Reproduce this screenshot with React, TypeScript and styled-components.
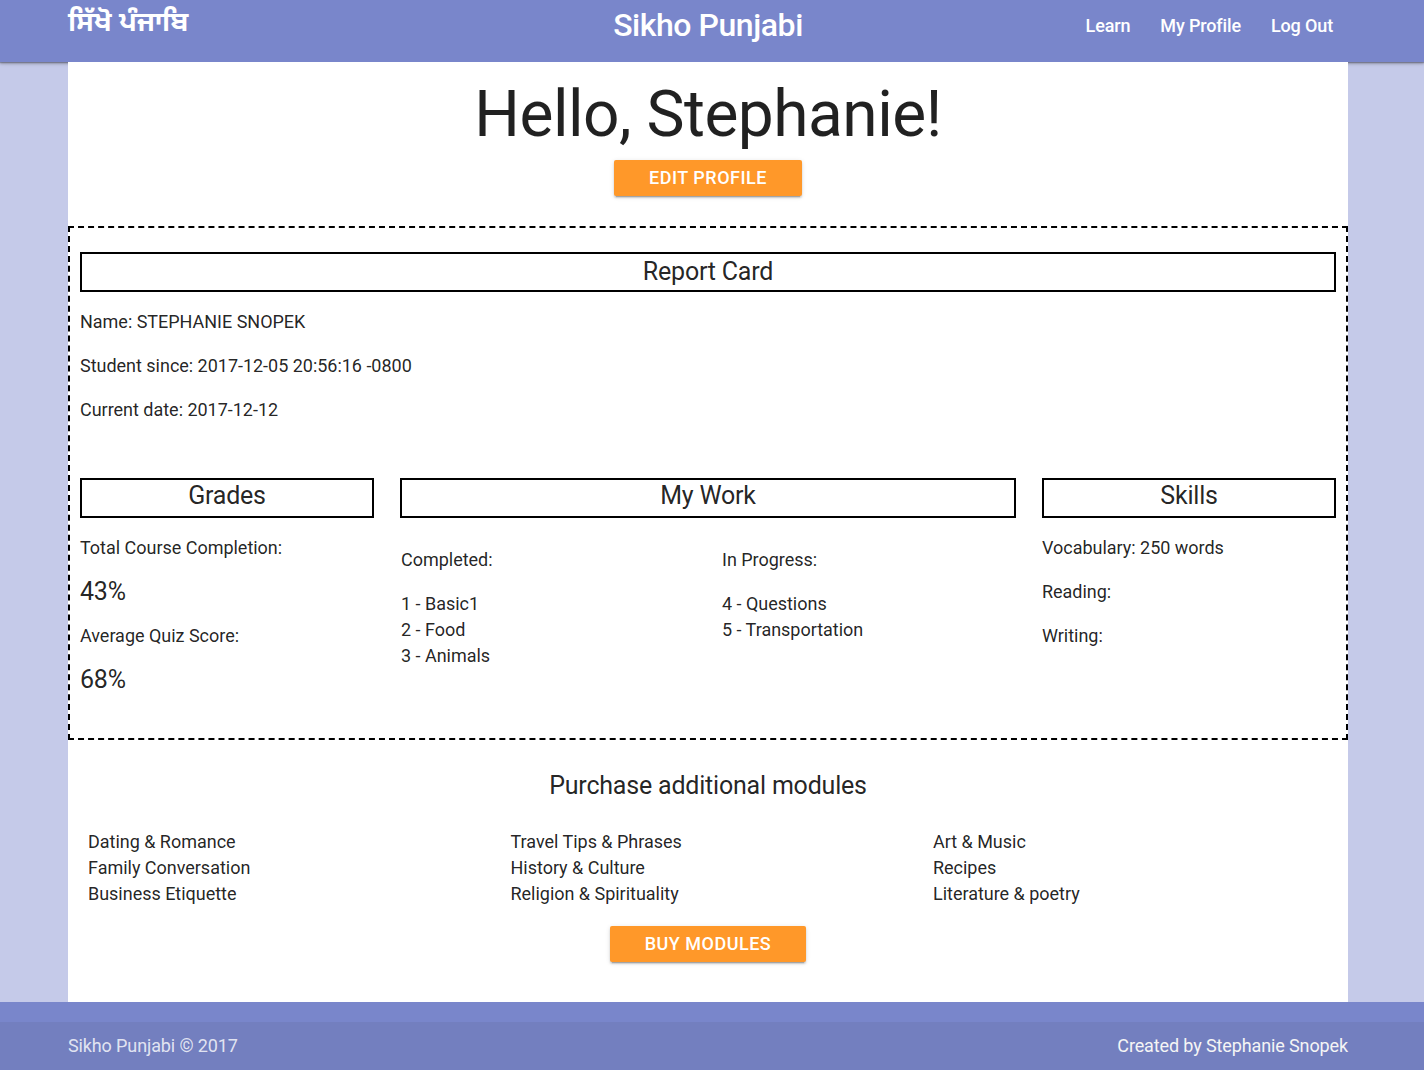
import React from "react";
import styled, { createGlobalStyle } from "styled-components";

const Global = createGlobalStyle`
  * { box-sizing: border-box; }
  body { margin: 0; background: #c5cae9; color: rgba(0,0,0,0.87); font: 18px/26px Roboto, sans-serif; letter-spacing: -.02px; }
  p, h1, h2, h3 { margin: 0; font-weight: 400; }
`;
const Nav = styled.nav`
  height: 62px; padding: 0 76px 0 68px; background: #7986cb; color: #fff;
  display: grid; grid-template-columns: 1fr auto 1fr;
  box-shadow: 0 2px 2px 0 rgba(0,0,0,.16), 0 1px 5px 0 rgba(0,0,0,.14), 0 1px 1px 0 rgba(0,0,0,.22);
`;
const Script = styled.div`font: 700 27.7px/42px "Noto Sans Gurmukhi", "Noto Sans", sans-serif; letter-spacing: 0; padding-top: 3px; white-space: nowrap;`;
const Brand = styled.div`font-size: 32px; line-height: 50px; font-weight: 500; letter-spacing: -.45px;`;
const Links = styled.div`display: flex; justify-content: flex-end; gap: 30px; padding: 13px 15px 0 0; font-weight: 500; letter-spacing: -.14px;`;
const Page = styled.main`position: relative; width: 1280px; height: 940px; margin-left: 68px; background: #fff;`;
const Hero = styled.header`height: 164px; display: flex; flex-direction: column; align-items: center;`;
const Title = styled.h1`font-size: 64px; line-height: 96px; padding-top: 5px; height: 98px; letter-spacing: -.5px;`;
const Button = styled.button<{ $w: number }>`
  width: ${(p) => p.$w}px; height: 36px; border: 0; border-radius: 2px; background: #ff9829; color: #fff;
  font: 500 18px/36px Roboto, sans-serif; letter-spacing: .5px; padding: 0;
  box-shadow: 0 2px 2px 0 rgba(0,0,0,.14), 0 1px 5px 0 rgba(0,0,0,.12), 0 3px 1px -2px rgba(0,0,0,.2);
`;
const Report = styled.section`height: 514px; border: 2px dashed #000; padding: 24px 10px 0;`;
const Box = styled.h2<{ $lh?: number }>`height: 40px; border: 2px solid #000; text-align: center; font-size: 25px; letter-spacing: -.2px; line-height: ${(p) => p.$lh ?? 32}px;`;
const Stack = styled.div<{ $top: number }>`display: flex; flex-direction: column; gap: 18px; padding-top: ${(p) => p.$top}px;`;
const Columns = styled.div`display: grid; grid-template-columns: 294px 616px 294px; gap: 26px; margin-top: 55px;`;
const Score = styled.p`font-size: 25px; letter-spacing: -.2px;`;
const Work = styled.div`display: grid; grid-template-columns: 321px 1fr; padding-left: 1px;`;
const Shop = styled.section`display: flex; flex-direction: column; align-items: center; padding-top: 32px;`;
const Heading = styled.h2`font-size: 25px; line-height: 28px; letter-spacing: -.2px;`;
const Modules = styled.div`width: 100%; display: grid; grid-template-columns: repeat(3, 422.5px); padding: 29px 0 19px 20px;`;
const Footer = styled.footer`height: 68px; padding-top: 20px; background: #7986cb; color: #f5f5f5;`;
const Copyright = styled.div`
  height: 48px; background: rgba(51,51,51,.08); padding: 0 76px 0 68px; line-height: 48px; letter-spacing: -.12px;
  display: flex; justify-content: space-between;
`;
const Muted = styled.span`color: rgba(255,255,255,.8);`;

const lessons = [["Completed:", "1 - Basic1", "2 - Food", "3 - Animals"], ["In Progress:", "4 - Questions", "5 - Transportation"]];
const modules = [
  ["Dating & Romance", "Family Conversation", "Business Etiquette"],
  ["Travel Tips & Phrases", "History & Culture", "Religion & Spirituality"],
  ["Art & Music", "Recipes", "Literature & poetry"],
];

export default function App() {
  return (
    <>
      <Global />
      <Nav>
        <Script lang="pa">ਸਿੱਖੋ ਪੰਜਾਬਿ</Script>
        <Brand>Sikho Punjabi</Brand>
        <Links><span>Learn</span><span>My Profile</span><span>Log Out</span></Links>
      </Nav>
      <Page>
        <Hero><Title>Hello, Stephanie!</Title><Button $w={188}>EDIT PROFILE</Button></Hero>
        <Report>
          <Box $lh={36}>Report Card</Box>
          <Stack $top={17}>
            <p>Name: STEPHANIE SNOPEK</p><p>Student since: 2017-12-05 20:56:16 -0800</p><p>Current date: 2017-12-12</p>
          </Stack>
          <Columns>
            <div>
              <Box>Grades</Box>
              <Stack $top={17}><p>Total Course Completion:</p><Score>43%</Score><p>Average Quiz Score:</p><Score>68%</Score></Stack>
            </div>
            <div>
              <Box>My Work</Box>
              <Work>
                {lessons.map(([label, ...items]) => (
                  <Stack $top={29} key={label}><p>{label}</p><div>{items.map((i) => <p key={i}>{i}</p>)}</div></Stack>
                ))}
              </Work>
            </div>
            <div>
              <Box>Skills</Box>
              <Stack $top={17}><p>Vocabulary: 250 words</p><p>Reading:</p><p>Writing:</p></Stack>
            </div>
          </Columns>
        </Report>
        <Shop>
          <Heading>Purchase additional modules</Heading>
          <Modules>{modules.map((m) => <div key={m[0]}>{m.map((t) => <p key={t}>{t}</p>)}</div>)}</Modules>
          <Button $w={196}>BUY MODULES</Button>
        </Shop>
      </Page>
      <Footer><Copyright><Muted>Sikho Punjabi © 2017</Muted><span>Created by Stephanie Snopek</span></Copyright></Footer>
    </>
  );
}
